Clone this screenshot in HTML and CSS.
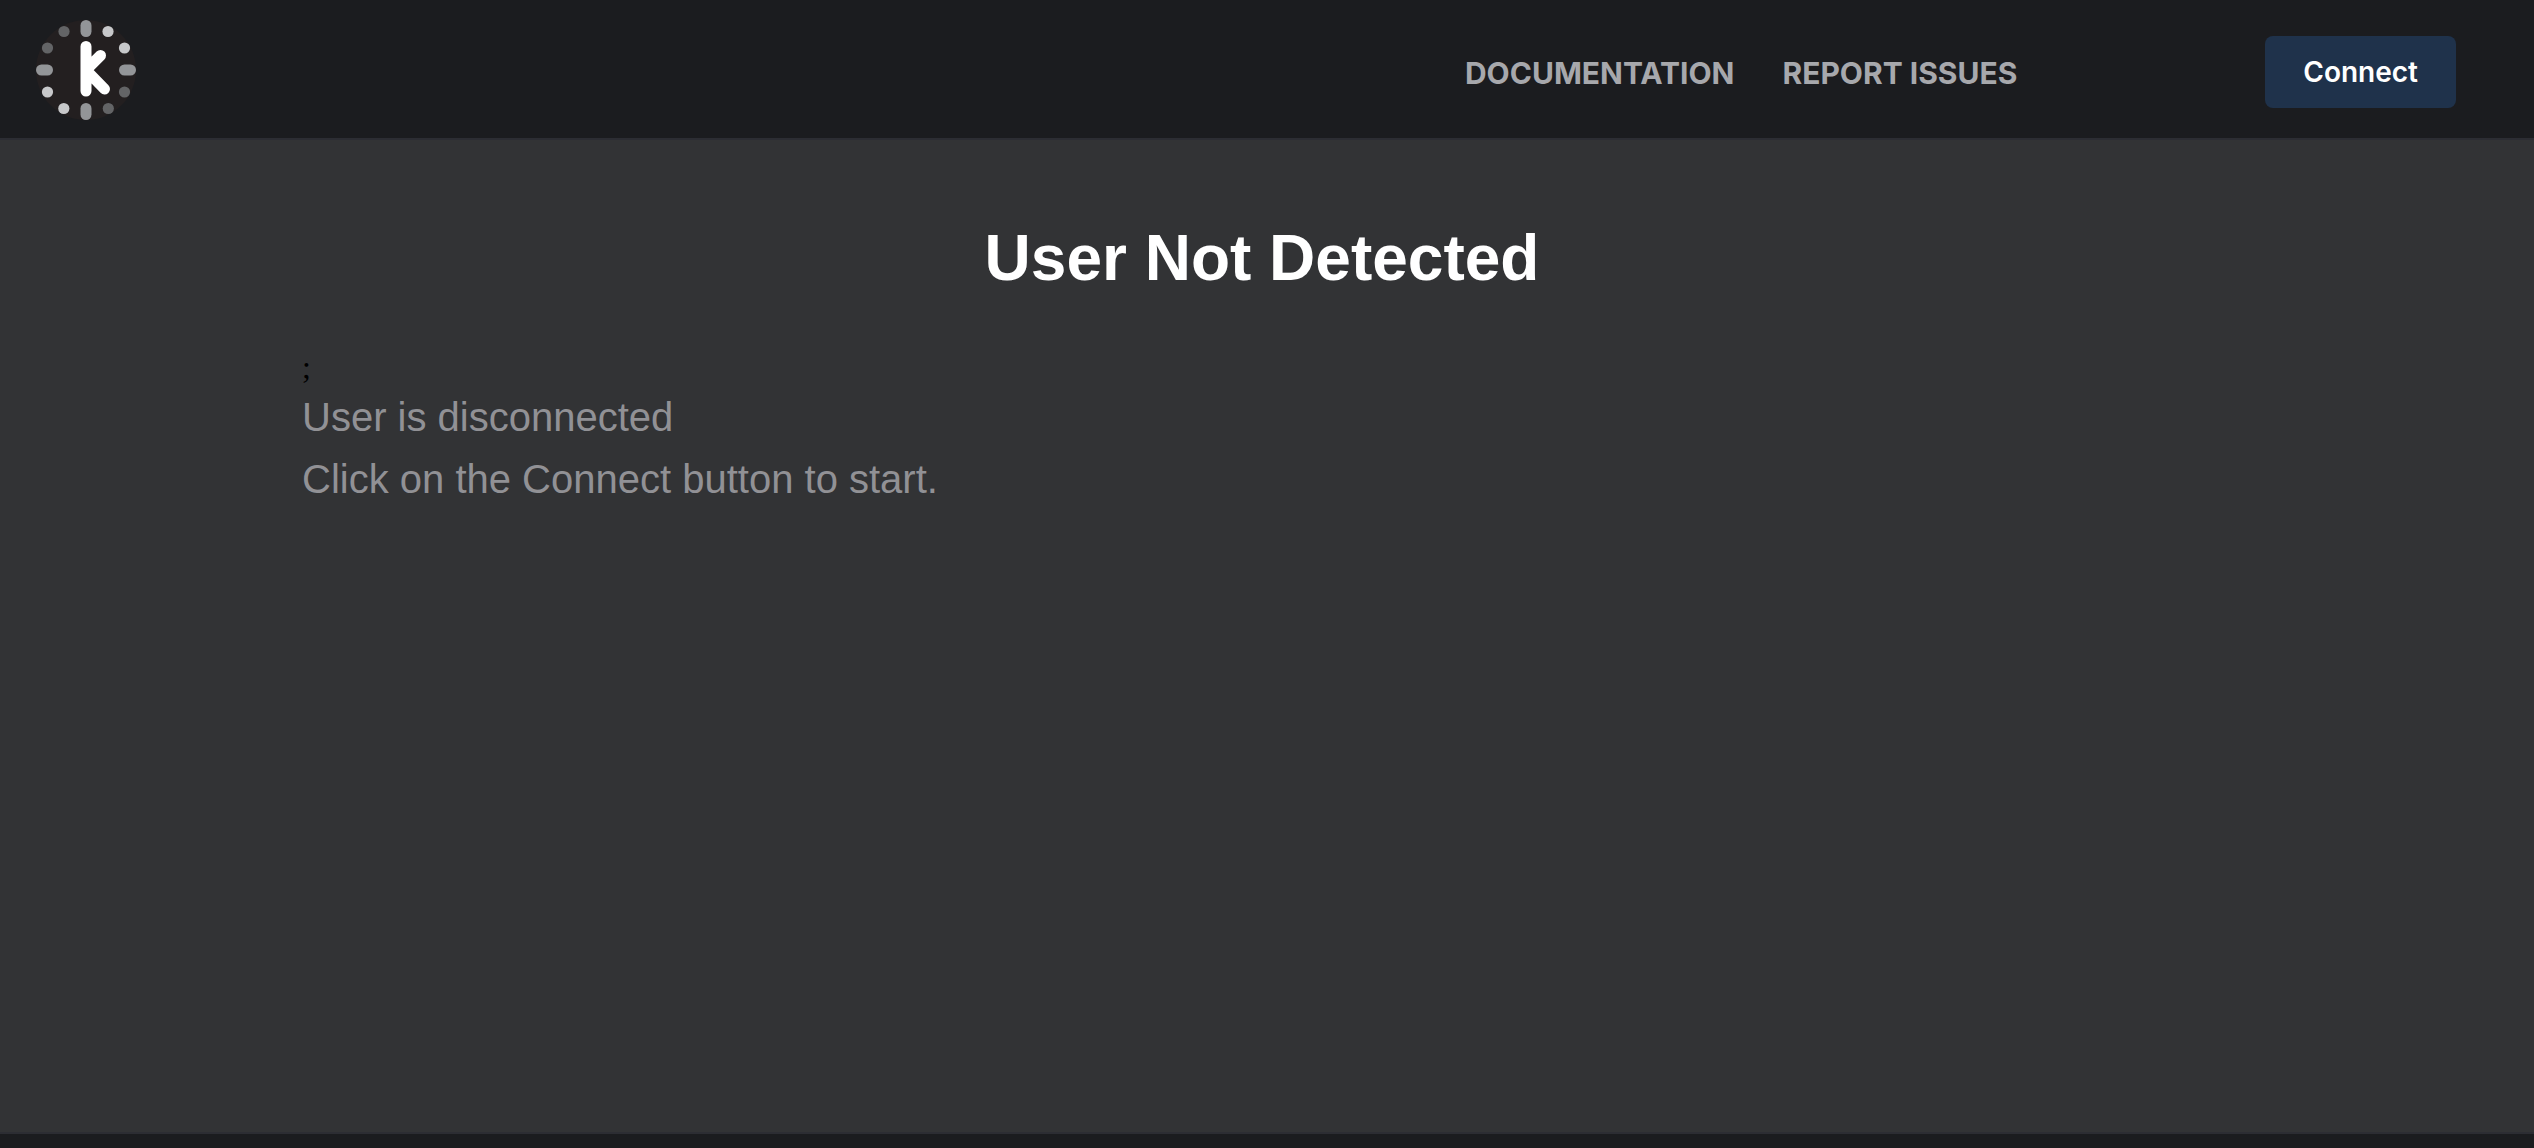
FILE: index.html
```html
<!DOCTYPE html>
<html lang="en">
<head>
<meta charset="utf-8">
<title>User Not Detected</title>
<meta name="viewport" content="width=device-width, initial-scale=1">
<link rel="stylesheet" href="styles.css">
</head>
<body>
<header class="header">
  <a class="logo" href="#" aria-label="Home">
    <svg class="logo-mark" viewBox="0 0 100 100" aria-hidden="true">
      <circle cx="50" cy="50" r="50" fill="#231f20"/>
      <g fill="#939598">
        <rect x="44.500" y="0" width="11" height="17" rx="5.500"/>
        <rect x="44.500" y="83" width="11" height="17" rx="5.500"/>
        <rect x="0" y="44.500" width="17" height="11" rx="5.500"/>
        <rect x="83" y="44.500" width="17" height="11" rx="5.500"/>
      </g>
      <g fill="#c7c8ca">
        <circle cx="72" cy="11.500" r="5.600"/>
        <circle cx="88.500" cy="28" r="5.600"/>
        <circle cx="11.500" cy="72" r="5.600"/>
        <circle cx="27.800" cy="88.500" r="5.600"/>
      </g>
      <g fill="#636466">
        <circle cx="28" cy="11.500" r="5.600"/>
        <circle cx="11.500" cy="28" r="5.600"/>
        <circle cx="88.500" cy="72" r="5.600"/>
        <circle cx="72.300" cy="88.500" r="5.600"/>
      </g>
      <path d="M50 26.500V71M64.500 35.500L50 50L68.500 69" fill="none" stroke="#fff" stroke-width="11" stroke-linecap="round" stroke-linejoin="round"/>
    </svg>
  </a>
  <nav class="nav">
    <a class="nav-link" href="#">DOCUMENTATION</a>
    <a class="nav-link" href="#">REPORT ISSUES</a>
  </nav>
  <button class="connect" type="button">Connect</button>
</header>
<main class="main">
  <div class="content">
    <h1 class="title">User Not Detected</h1>
    <div class="stray">;</div>
    <p class="message">User is disconnected</p>
    <p class="message">Click on the Connect button to start.</p>
  </div>
</main>
<footer class="footer"></footer>
</body>
</html>
```
FILE: styles.css
```css
* {
  box-sizing: border-box;
}

body {
  margin: 0;
  min-height: 100vh;
  display: flex;
  flex-direction: column;
  background: #323335;
  font-family: "Liberation Sans", Arial, sans-serif;
}

.header {
  display: flex;
  align-items: center;
  padding: 20px 78px 18px 36px;
  background: #1b1c1f;
  border-bottom: 2px solid #2c2d33;
  font-family: Inter, sans-serif;
}

.logo,
.logo-mark {
  display: block;
  width: 100px;
  height: 100px;
}

.nav {
  display: flex;
  gap: 48px;
  margin-left: auto;
  margin-right: 248px;
  padding-top: 6px;
}

.nav-link {
  color: #a7a8ac;
  font-size: 30px;
  line-height: 36px;
  font-weight: 700;
  text-decoration: none;
}

.connect {
  margin: 4px 0 0;
  padding: 18px 38px;
  border: 0;
  border-radius: 8px;
  background: #1f324b;
  color: #fff;
  font-family: inherit;
  font-size: 28px;
  line-height: 36px;
  font-weight: 600;
}

.main {
  flex: 1;
  padding: 80px 10px 80px 0;
}

.content {
  max-width: 1920px;
  margin: 0 auto;
}

.title {
  margin: 0 0 52px;
  color: #fff;
  font-size: 64px;
  line-height: 76px;
  font-weight: 700;
  text-align: center;
}

.stray {
  color: #000;
  font-family: "Liberation Serif", serif;
  font-size: 32px;
  line-height: 38px;
}

.message {
  margin: 0;
  color: #919195;
  font-size: 40px;
  line-height: 62px;
}

.footer {
  min-height: 16px;
  background: #1b1c1f;
  border-top: 2px solid #2c2d33;
}
```
